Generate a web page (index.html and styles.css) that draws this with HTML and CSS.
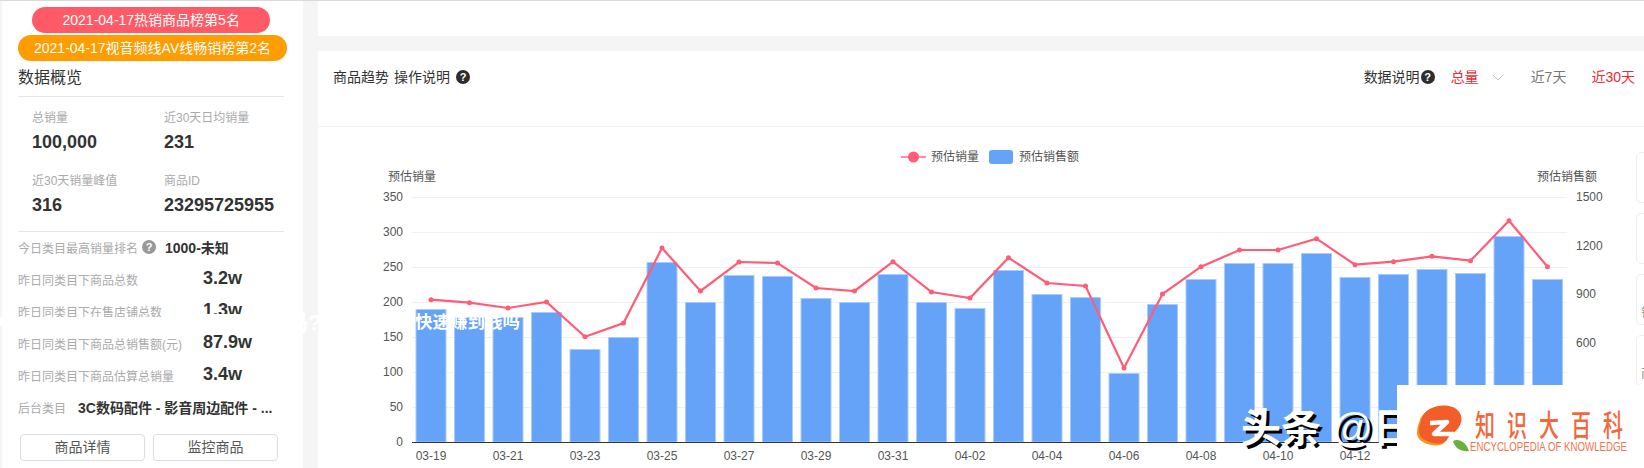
FILE: index.html
```html
<!DOCTYPE html>
<html lang="zh-CN">
  <head>
    <meta charset="UTF-8" />
    <title>商品趋势</title>
    <link rel="stylesheet" href="styles.css">
  </head>
  <body>
    <!-- 左侧数据概览 -->
    <aside class="side">
      <div class="pill pill-red">2021-04-17热销商品榜第5名</div>
      <div class="pill pill-orange">2021-04-17视音频线AV线畅销榜第2名</div>
      <h2 class="side-title">数据概览</h2>
      <div class="stats">
        <div class="stat"><span class="stat-label">总销量</span><b class="stat-value">100,000</b></div>
        <div class="stat"><span class="stat-label">近30天日均销量</span><b class="stat-value">231</b></div>
        <div class="stat"><span class="stat-label">近30天销量峰值</span><b class="stat-value">316</b></div>
        <div class="stat"><span class="stat-label">商品ID</span><b class="stat-value">23295725955</b></div>
      </div>
      <div class="rows">
        <div class="row">
          <span class="row-label">今日类目最高销量排名</span>
          <span class="help help-grey">?</span>
          <b class="row-text row-rank">1000-未知</b>
        </div>
        <div class="row"><span class="row-label row-wide">昨日同类目下商品总数</span><b class="row-num">3.2w</b></div>
        <div class="row"><span class="row-label row-wide">昨日同类目下在售店铺总数</span><b class="row-num">1.3w</b></div>
        <div class="row"><span class="row-label row-wide">昨日同类目下商品总销售额(元)</span><b class="row-num">87.9w</b></div>
        <div class="row"><span class="row-label row-wide">昨日同类目下商品估算总销量</span><b class="row-num">3.4w</b></div>
        <div class="row">
          <span class="row-label">后台类目</span>
          <b class="row-text row-cat">3C数码配件 - 影音周边配件 - ...</b>
        </div>
      </div>
      <div class="btns">
        <div class="btn">商品详情</div>
        <div class="btn">监控商品</div>
      </div>
    </aside>

    <main class="main">
      <div class="card-top"></div>
      <section class="card">
        <header class="card-head">
          <div class="head-left">
            <span>商品趋势</span>
            <span>操作说明</span>
            <span class="help">?</span>
          </div>
          <div class="head-right">
            <span class="explain">数据说明<span class="help">?</span></span>
            <span class="red">总量</span>
            <svg class="chevron" width="12" height="7" viewBox="0 0 12 7"><polyline points="1,1 6,6 11,1" /></svg>
            <span class="range">近7天</span>
            <span class="red range-last">近30天</span>
          </div>
        </header>
        <div class="card-body">
          <!-- 图表坐标直接用页面坐标，方便对照 -->
          <svg class="chart" width="1318" height="340" viewBox="318 128 1318 340">
            <g class="grid">
              <line x1="412" x2="1567" y1="198.5" y2="198.5" />
              <line x1="412" x2="1567" y1="233.5" y2="233.5" />
              <line x1="412" x2="1567" y1="268.5" y2="268.5" />
              <line x1="412" x2="1567" y1="303.5" y2="303.5" />
              <line x1="412" x2="1567" y1="338.5" y2="338.5" />
              <line x1="412" x2="1567" y1="373.5" y2="373.5" />
              <line x1="412" x2="1567" y1="408.5" y2="408.5" />
            </g>
            <g class="bars">
              <rect x="416" y="310.5" width="30" height="132.5" />
              <rect x="454.5" y="318.5" width="30" height="124.5" />
              <rect x="493" y="318.5" width="30" height="124.5" />
              <rect x="531.5" y="313.5" width="30" height="129.5" />
              <rect x="570" y="350.5" width="30" height="92.5" />
              <rect x="608.5" y="338.5" width="30" height="104.5" />
              <rect x="647" y="263.5" width="30" height="179.5" />
              <rect x="685.5" y="303.5" width="30" height="139.5" />
              <rect x="724" y="276.5" width="30" height="166.5" />
              <rect x="762.5" y="277.5" width="30" height="165.5" />
              <rect x="801" y="299.5" width="30" height="143.5" />
              <rect x="839.5" y="303.5" width="30" height="139.5" />
              <rect x="878" y="275.5" width="30" height="167.5" />
              <rect x="916.5" y="303.5" width="30" height="139.5" />
              <rect x="955" y="309.5" width="30" height="133.5" />
              <rect x="993.5" y="271.5" width="30" height="171.5" />
              <rect x="1032" y="295.5" width="30" height="147.5" />
              <rect x="1070.5" y="298.5" width="30" height="144.5" />
              <rect x="1109" y="374.5" width="30" height="68.5" />
              <rect x="1147.5" y="305.5" width="30" height="137.5" />
              <rect x="1186" y="280.5" width="30" height="162.5" />
              <rect x="1224.5" y="264.5" width="30" height="178.5" />
              <rect x="1263" y="264.5" width="30" height="178.5" />
              <rect x="1301.5" y="254.5" width="30" height="188.5" />
              <rect x="1340" y="278.5" width="30" height="164.5" />
              <rect x="1378.5" y="275.5" width="30" height="167.5" />
              <rect x="1417" y="270.5" width="30" height="172.5" />
              <rect x="1455.5" y="274.5" width="30" height="168.5" />
              <rect x="1494" y="237.5" width="30" height="205.5" />
              <rect x="1532.5" y="280.5" width="30" height="162.5" />
            </g>
            <line class="axis" x1="412" x2="1567" y1="443.5" y2="443.5" />
            <polyline class="trend" points="431,300.7 469.5,303.7 508,309 546.5,303 585,337.7 623.5,324 662,249 700.5,292 739,263 777.5,264 816,289 854.5,292 893,262.7 931.5,293 970,299 1008.5,258.7 1047,284 1085.5,287 1124,369 1162.5,295 1201,267.7 1239.5,251 1278,251 1316.5,239.7 1355,265.7 1393.5,262.7 1432,257.3 1470.5,261.7 1509,221.7 1547.5,267.7" />
            <g class="dots">
              <circle cx="431" cy="300.7" r="2.5" /><circle cx="469.5" cy="303.7" r="2.5" /><circle cx="508" cy="309" r="2.5" />
              <circle cx="546.5" cy="303" r="2.5" /><circle cx="585" cy="337.7" r="2.5" /><circle cx="623.5" cy="324" r="2.5" />
              <circle cx="662" cy="249" r="2.5" /><circle cx="700.5" cy="292" r="2.5" /><circle cx="739" cy="263" r="2.5" />
              <circle cx="777.5" cy="264" r="2.5" /><circle cx="816" cy="289" r="2.5" /><circle cx="854.5" cy="292" r="2.5" />
              <circle cx="893" cy="262.7" r="2.5" /><circle cx="931.5" cy="293" r="2.5" /><circle cx="970" cy="299" r="2.5" />
              <circle cx="1008.5" cy="258.7" r="2.5" /><circle cx="1047" cy="284" r="2.5" /><circle cx="1085.5" cy="287" r="2.5" />
              <circle cx="1124" cy="369" r="2.5" /><circle cx="1162.5" cy="295" r="2.5" /><circle cx="1201" cy="267.7" r="2.5" />
              <circle cx="1239.5" cy="251" r="2.5" /><circle cx="1278" cy="251" r="2.5" /><circle cx="1316.5" cy="239.7" r="2.5" />
              <circle cx="1355" cy="265.7" r="2.5" /><circle cx="1393.5" cy="262.7" r="2.5" /><circle cx="1432" cy="257.3" r="2.5" />
              <circle cx="1470.5" cy="261.7" r="2.5" /><circle cx="1509" cy="221.7" r="2.5" /><circle cx="1547.5" cy="267.7" r="2.5" />
            </g>
            <!-- 图例 -->
            <line class="legend-line" x1="901" x2="926" y1="158" y2="158" />
            <circle class="legend-dot" cx="913.5" cy="158" r="5.5" />
            <text class="label" x="931" y="162">预估销量</text>
            <rect class="legend-bar" x="989" y="151" width="24" height="14" rx="3" />
            <text class="label" x="1019" y="162">预估销售额</text>
            <!-- 坐标轴文字 -->
            <text class="label" x="388" y="182">预估销量</text>
            <text class="label" x="1537" y="182">预估销售额</text>
            <g class="label ticks-left">
              <text x="403" y="202">350</text><text x="403" y="237">300</text><text x="403" y="272">250</text>
              <text x="403" y="307">200</text><text x="403" y="342">150</text><text x="403" y="377">100</text>
              <text x="403" y="412">50</text><text x="403" y="447">0</text>
            </g>
            <g class="label">
              <text x="1576" y="202">1500</text><text x="1576" y="251">1200</text><text x="1576" y="299">900</text>
              <text x="1576" y="348">600</text><text x="1576" y="397">300</text><text x="1576" y="447">0</text>
            </g>
            <g class="label ticks-bottom">
              <text x="431" y="461">03-19</text><text x="508" y="461">03-21</text><text x="585" y="461">03-23</text>
              <text x="662" y="461">03-25</text><text x="739" y="461">03-27</text><text x="816" y="461">03-29</text>
              <text x="893" y="461">03-31</text><text x="970" y="461">04-02</text><text x="1047" y="461">04-04</text>
              <text x="1124" y="461">04-06</text><text x="1201" y="461">04-08</text><text x="1278" y="461">04-10</text>
              <text x="1355" y="461">04-12</text>
            </g>
          </svg>
          <!-- 右边露出一点的小卡片 -->
          <div class="mini-cards">
            <div class="mini"></div>
            <div class="mini"></div>
            <div class="mini">销</div>
            <div class="mini">商</div>
          </div>
        </div>
      </section>
    </main>

    <!-- 盖在页面上的水印 -->
    <div class="strip"></div>
    <div class="caption">快速赚到钱吗</div>
    <div class="caption caption-end">吗?</div>
    <div class="toutiao">头条 <span class="at">@</span>日</div>
    <div class="logo-box">
      <svg width="247" height="83" viewBox="0 0 247 83">
        <path class="logo-back" d="M22 38C24 26 38 21 50 23C61 25 66 35 60 44C56 50 50 51 48 57C44 62 34 61 28 58C18 54 19 46 22 38Z" />
        <path class="logo-front" d="M24 36C26 24 40 19 52 21C63 23 68 33 62 42C58 48 52 49 50 55C46 60 36 59 30 56C20 52 21 44 24 36Z" />
        <polyline class="logo-z" points="33,38 50,37 37,49 57,49" />
        <path class="logo-leaf" d="M56 56C62 53 69 57 72 66C65 67 58 64 56 56Z" />
        <text class="logo-name" transform="scale(1,1.5)" x="78 110 142 174 206" y="34">知识大百科</text>
        <text class="logo-en" x="73" y="66" textLength="157" lengthAdjust="spacingAndGlyphs">ENCYCLOPEDIA OF KNOWLEDGE</text>
      </svg>
    </div>
  </body>
</html>
```

FILE: styles.css
```css
* {
  padding: 0;
  margin: 0;
  box-sizing: border-box;
}
body {
  position: relative;
  display: flex;
  height: 468px;
  overflow: hidden;
  border-top: 1px solid rgb(218, 218, 218);
  background-color: rgb(245, 245, 245);
  font-family: "Liberation Sans", "Noto Sans CJK SC", sans-serif;
  font-size: 14px;
  color: rgb(51, 51, 51);
}

/* 左侧 */
.side {
  display: flex;
  flex-direction: column;
  align-items: flex-start;
  flex: none;
  width: 301px;
  margin-left: 2px;
  padding: 6px 19px 0 16px;
  background-color: rgb(255, 255, 255);
}
.pill {
  height: 26px;
  line-height: 26px;
  border-radius: 13px;
  color: rgb(255, 255, 255);
  white-space: nowrap;
}
.pill-red {
  margin-left: 14px;
  padding: 0 30.5px;
  background-color: rgb(255, 90, 101);
}
.pill-orange {
  margin-top: 2px;
  padding: 0 16px;
  background-color: rgb(255, 156, 0);
}
.side-title {
  width: 266px;
  margin-top: 6px;
  padding-bottom: 7px;
  border-bottom: 1px solid rgb(230, 230, 230);
  font-size: 16px;
  font-weight: normal;
  line-height: 22px;
}
.stats {
  display: grid;
  grid-template-columns: 132px 134px;
  row-gap: 19px;
  width: 266px;
  padding: 13px 0 14px 14px;
  border-bottom: 1px solid rgb(230, 230, 230);
}
.stat {
  display: flex;
  flex-direction: column;
  gap: 4px;
}
.stat-label {
  font-size: 12px;
  line-height: 16px;
  color: rgb(170, 170, 170);
}
.stat-value {
  font-size: 18px;
  line-height: 24px;
}
.rows {
  margin-top: -1px;
}
.row {
  display: flex;
  align-items: center;
  height: 32px;
}
.row-label {
  font-size: 12px;
  color: rgb(170, 170, 170);
  white-space: nowrap;
}
.row-wide {
  width: 185px;
}
.row-num {
  position: relative;
  top: -1px;
  font-size: 18px;
}
.row-text {
  white-space: nowrap;
}
.row-rank {
  margin-left: 9px;
}
.row-cat {
  margin-left: 12px;
}
.btns {
  display: flex;
  gap: 8px;
  margin: 11px 0 0 2px;
}
.btn {
  width: 125px;
  height: 27px;
  line-height: 25px;
  border: 1px solid rgb(220, 220, 228);
  border-radius: 4px;
  text-align: center;
  color: rgb(85, 85, 85);
}

/* 问号 */
.help {
  display: inline-block;
  flex: none;
  width: 14px;
  height: 14px;
  line-height: 14px;
  border-radius: 50%;
  background-color: rgb(45, 45, 45);
  text-align: center;
  font-size: 11px;
  font-weight: bold;
  color: rgb(255, 255, 255);
}
.help-grey {
  margin-left: 4px;
  background-color: rgb(153, 153, 153);
}

/* 右侧 */
.main {
  display: flex;
  flex-direction: column;
  flex: 1;
  min-width: 0;
  margin-left: 15px;
}
.card-top {
  flex: none;
  height: 35px;
  background-color: rgb(255, 255, 255);
}
.card {
  flex: 1;
  margin-top: 15px;
  background-color: rgb(255, 255, 255);
}
.card-head {
  display: flex;
  justify-content: space-between;
  height: 76px;
  padding: 16px 9px 0 15px;
  border-bottom: 1px solid rgb(242, 242, 242);
  line-height: 20px;
}
.head-left {
  display: flex;
  align-items: center;
  gap: 5px;
  height: 20px;
}
.head-left .help {
  margin-left: 1px;
}
.head-right {
  display: flex;
  align-items: center;
  height: 20px;
}
.explain {
  display: flex;
  align-items: center;
  gap: 1px;
  margin-right: 16px;
}
.red {
  color: rgb(240, 40, 50);
}
.chevron {
  margin-left: 13px;
  fill: none;
  stroke: rgb(190, 196, 206);
}
.range {
  margin-left: 27px;
  color: rgb(119, 119, 119);
}
.range-last {
  margin-left: 25px;
  color: rgb(240, 40, 50);
}
.card-body {
  display: flex;
}
.chart {
  flex: none;
  display: block;
}
.grid line {
  stroke: rgb(240, 240, 240);
}
.bars rect {
  fill: rgb(101, 163, 248);
  stroke: rgb(170, 203, 251);
}
.axis {
  stroke: rgb(51, 51, 51);
}
.trend {
  fill: none;
  stroke: rgb(255, 92, 119);
  stroke-width: 2.2;
}
.dots circle {
  fill: rgb(255, 92, 119);
}
.legend-line {
  stroke: rgb(255, 140, 160);
  stroke-width: 2;
}
.legend-dot {
  fill: rgb(255, 92, 119);
}
.legend-bar {
  fill: rgb(101, 163, 248);
}
.label {
  font-size: 12px;
  fill: rgb(85, 85, 85);
}
.ticks-left text {
  text-anchor: end;
}
.ticks-bottom text {
  text-anchor: middle;
}
.mini-cards {
  display: flex;
  flex-direction: column;
  gap: 10px;
  padding-top: 25px;
}
.mini {
  display: flex;
  align-items: flex-end;
  width: 60px;
  height: 51px;
  padding: 0 0 4px 4px;
  border: 1px solid rgb(238, 238, 238);
  border-radius: 5px;
  font-size: 12px;
  color: rgb(136, 136, 136);
}

/* 水印 */
.strip {
  position: absolute;
  top: 316px;
  left: 0;
  width: 303px;
  height: 9px;
  background-color: rgb(255, 255, 255);
}
/* 右半边数字被盖得更多一点 */
.strip::after {
  content: "";
  position: absolute;
  top: -3px;
  left: 190px;
  width: 113px;
  height: 3px;
  background-color: rgb(255, 255, 255);
}
.caption {
  position: absolute;
  top: 309px;
  left: 415px;
  font-size: 17.5px;
  line-height: 24px;
  font-weight: bold;
  color: rgb(255, 255, 255);
  white-space: nowrap;
}
.caption-end {
  top: 308px;
  left: 286px;
  font-size: 22px;
  line-height: 28px;
}
.toutiao {
  position: absolute;
  top: 401px;
  left: 1241px;
  font-size: 40px;
  line-height: 52px;
  font-weight: bold;
  color: rgb(255, 255, 255);
  text-shadow: 3px 3px 0 rgb(0, 0, 0);
  white-space: nowrap;
}
.at {
  font-weight: normal;
}
.logo-box {
  position: absolute;
  top: 384px;
  left: 1397px;
  width: 247px;
  height: 83px;
  background-color: rgb(255, 255, 255);
}
.logo-back {
  fill: rgb(247, 147, 30);
}
.logo-front {
  fill: rgb(243, 93, 42);
}
.logo-z {
  fill: none;
  stroke: rgb(255, 255, 255);
  stroke-width: 4.5;
  stroke-linejoin: round;
}
.logo-leaf {
  fill: rgb(106, 176, 62);
}
.logo-name {
  font-size: 20px;
  font-weight: 500;
  fill: rgb(244, 103, 58);
}
.logo-en {
  font-size: 12px;
  fill: rgb(244, 115, 74);
}
```
